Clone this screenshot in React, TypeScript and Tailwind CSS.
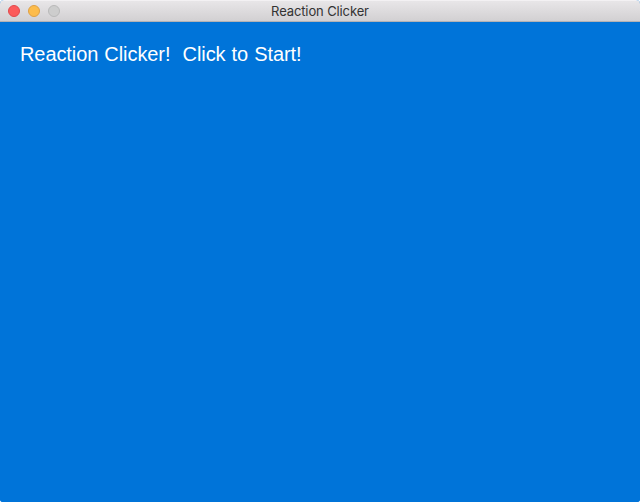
export default function App() {
  return (
    <div className="h-[502px] w-[640px] bg-white">
      <div className="flex h-full flex-col overflow-hidden rounded-t-[4px] rounded-b-[3px] bg-[#0074d9]">
        <header className="grid h-[22px] shrink-0 grid-cols-[1fr_auto_1fr] items-center border-t border-b border-t-[#f3f1f3] border-b-[#b4b2b4] bg-linear-to-b from-[#e8e6e8] to-[#d2d0d2]">
          <div className="flex gap-2 pl-2">
            <span className="size-3 rounded-full border border-[#e2494c] bg-[#fc5b5b]" />
            <span className="size-3 rounded-full border border-[#dfa044] bg-[#fdbc4b]" />
            <span className="size-3 rounded-full border border-[#b9b9b9] bg-[#cdcdcd]" />
          </div>
          <h1 className="pt-px font-['Inter',sans-serif] text-[13px] leading-none tracking-[-0.12px] text-[#333333]">Reaction Clicker</h1>
          <div />
        </header>
        <main className="flex-1 bg-[#0074d9] px-5 pt-5">
          <p className="whitespace-pre font-['Liberation_Sans',sans-serif] text-[20px] leading-6 tracking-[-0.08px] text-white [word-spacing:0.6px]">{"Reaction Clicker!  Click to Start!"}</p>
        </main>
      </div>
    </div>
  );
}
